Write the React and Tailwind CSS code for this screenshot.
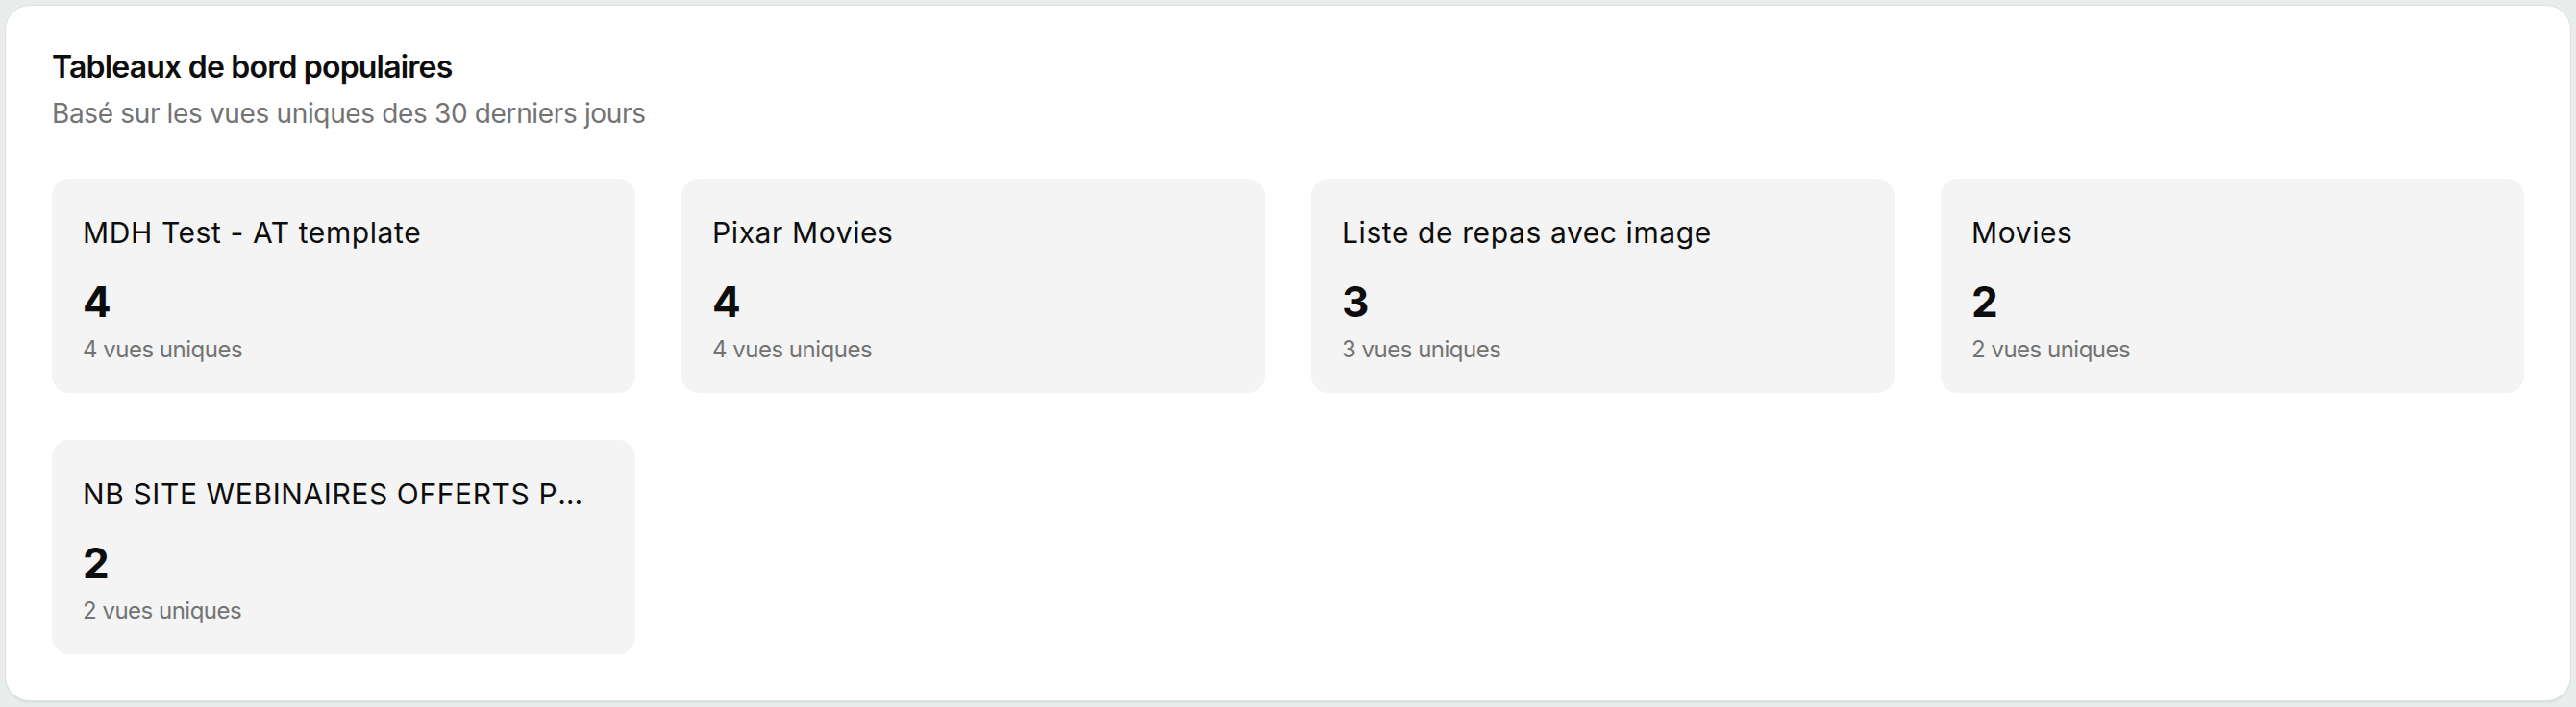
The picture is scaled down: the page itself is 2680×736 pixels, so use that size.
import React from 'react';

const dashboards = [
    { name: "MDH Test - AT template", views: 4 },
    { name: "Pixar Movies", views: 4 },
    { name: "Liste de repas avec image", views: 3 },
    { name: "Movies", views: 2 },
    { name: "NB SITE WEBINAIRES OFFERTS POUR LE MOIS", views: 2 },
];

function DashboardCard({ name, views }) {
    return (
        <div className="min-w-0 rounded-[18px] bg-[#f4f4f4] px-8 pt-8 pb-[29px]">
            <div className="truncate pr-2 text-[30px] leading-[48px] font-normal tracking-[0.6px] text-[#0d0d0d]">{name}</div>
            <div className="mt-[22px] text-[44px] leading-[52px] font-bold text-[#0d0d0d]">{views}</div>
            <div className="mt-[8px] text-[24px] leading-[32px] tracking-[-0.5px] text-[#737373]">{views} vues uniques</div>
        </div>
    );
}

export default function App() {
    return (
        <div className="min-h-screen bg-[#e9eeec] p-[5px]" style={{ fontFamily: 'Inter, "Noto Sans", sans-serif' }}>
            <div className="rounded-[26px] border border-[#dde1df] bg-white px-12 pt-[44px] pb-12 shadow-[0_2px_0_#dfe3e1]">
                <h2 className="text-[32px] leading-[40px] font-semibold tracking-[-0.8px] text-[#0d0d0d]">Tableaux de bord populaires</h2>
                <p className="mt-2 text-[28px] leading-[40px] tracking-[-0.35px] text-[#737373]">Basé sur les vues uniques des 30 derniers jours</p>

                <div className="mt-12 grid grid-cols-4 gap-x-12 gap-y-[49px]">
                    {dashboards.map(d => (
                        <DashboardCard key={d.name} name={d.name} views={d.views} />
                    ))}
                </div>
            </div>
        </div>
    );
}
